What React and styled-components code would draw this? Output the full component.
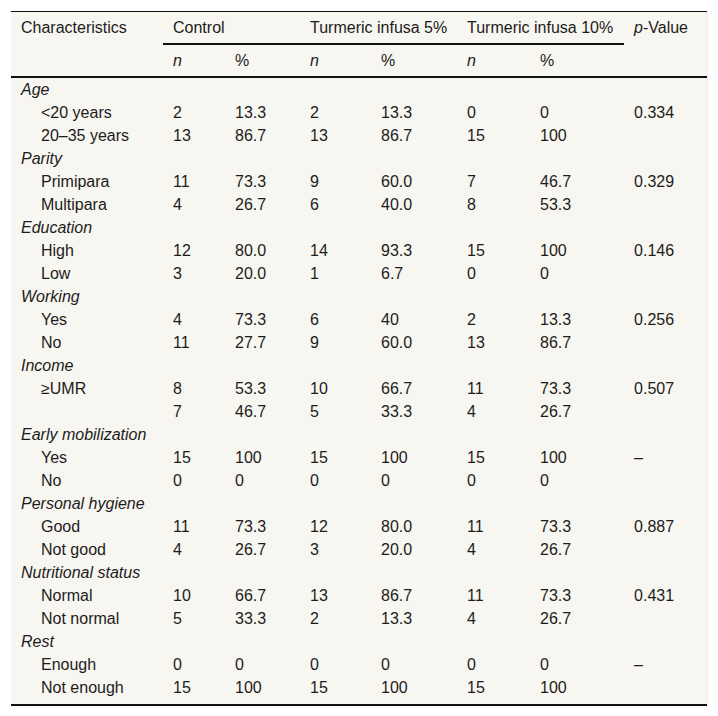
import React from 'react';
import styled, { createGlobalStyle } from 'styled-components';

const GlobalStyle = createGlobalStyle`
body {
  margin: 0;
  background: #ffffff;
  font-family: "Liberation Sans", Arial, sans-serif;
  color: #1c1c1c;
}
`;

const Page = styled.div`
padding: 11px;
`;

const Frame = styled.div`
width: 696px;
background: #f8f6f0;
border-right: 1px solid #ececec;
`;

const Table = styled.table`
width: 696px;
table-layout: fixed;
border-collapse: collapse;
border-top: 1px solid #111;
border-bottom: 2px solid #111;
font-size: 16px;
`;

const HeadCell = styled.th`
text-align: left;
font-weight: normal;
vertical-align: top;
padding: 0 10px;
height: 31px;
line-height: 31px;
white-space: nowrap;
border-bottom: ${p => (p.$rule ? '2px solid #111' : 'none')};
`;

const SubHead = styled.tr`
border-bottom: 2px solid #111;
`;

const Row = styled.tr``;

const Cell = styled.td`
padding: 0 10px;
padding-left: ${p => (p.$indent ? '30px' : '10px')};
padding-bottom: ${p => (p.$last ? '5px' : '0')};
vertical-align: top;
height: 23px;
line-height: 23px;
white-space: nowrap;
font-style: ${p => (p.$group ? 'italic' : 'normal')};
`;

const Italic = styled.i``;

const data = [
  { group: 'Age', rows: [
    ['<20 years', '2', '13.3', '2', '13.3', '0', '0', '0.334'],
    ['20–35 years', '13', '86.7', '13', '86.7', '15', '100', ''],
  ] },
  { group: 'Parity', rows: [
    ['Primipara', '11', '73.3', '9', '60.0', '7', '46.7', '0.329'],
    ['Multipara', '4', '26.7', '6', '40.0', '8', '53.3', ''],
  ] },
  { group: 'Education', rows: [
    ['High', '12', '80.0', '14', '93.3', '15', '100', '0.146'],
    ['Low', '3', '20.0', '1', '6.7', '0', '0', ''],
  ] },
  { group: 'Working', rows: [
    ['Yes', '4', '73.3', '6', '40', '2', '13.3', '0.256'],
    ['No', '11', '27.7', '9', '60.0', '13', '86.7', ''],
  ] },
  { group: 'Income', rows: [
    ['≥UMR', '8', '53.3', '10', '66.7', '11', '73.3', '0.507'],
    ['', '7', '46.7', '5', '33.3', '4', '26.7', ''],
  ] },
  { group: 'Early mobilization', rows: [
    ['Yes', '15', '100', '15', '100', '15', '100', '–'],
    ['No', '0', '0', '0', '0', '0', '0', ''],
  ] },
  { group: 'Personal hygiene', rows: [
    ['Good', '11', '73.3', '12', '80.0', '11', '73.3', '0.887'],
    ['Not good', '4', '26.7', '3', '20.0', '4', '26.7', ''],
  ] },
  { group: 'Nutritional status', rows: [
    ['Normal', '10', '66.7', '13', '86.7', '11', '73.3', '0.431'],
    ['Not normal', '5', '33.3', '2', '13.3', '4', '26.7', ''],
  ] },
  { group: 'Rest', rows: [
    ['Enough', '0', '0', '0', '0', '0', '0', '–'],
    ['Not enough', '15', '100', '15', '100', '15', '100', ''],
  ] },
];

const widths = [152, 62, 75, 71, 86, 73, 94, 83];

export default function App() {
  return (
    <Page>
      <GlobalStyle />
      <Frame>
        <Table>
          <colgroup>
            {widths.map((w, i) => <col key={i} style={{ width: w }} />)}
          </colgroup>
          <thead>
            <tr>
              <HeadCell rowSpan={2}>Characteristics</HeadCell>
              <HeadCell colSpan={2} $rule>Control</HeadCell>
              <HeadCell colSpan={2} $rule>Turmeric infusa 5%</HeadCell>
              <HeadCell colSpan={2} $rule>Turmeric infusa 10%</HeadCell>
              <HeadCell rowSpan={2}><Italic>p</Italic>-Value</HeadCell>
            </tr>
            <SubHead>
              <HeadCell><Italic>n</Italic></HeadCell>
              <HeadCell>%</HeadCell>
              <HeadCell><Italic>n</Italic></HeadCell>
              <HeadCell>%</HeadCell>
              <HeadCell><Italic>n</Italic></HeadCell>
              <HeadCell>%</HeadCell>
            </SubHead>
          </thead>
          <tbody>
            {data.map((section, si) => (
              <React.Fragment key={section.group}>
                <Row>
                  <Cell $group colSpan={8}>{section.group}</Cell>
                </Row>
                {section.rows.map((r, i) => {
                  const last = si === data.length - 1 && i === section.rows.length - 1;
                  return (
                    <Row key={i}>
                      {r.map((v, j) => (
                        <Cell key={j} $indent={j === 0} $last={last}>{v}</Cell>
                      ))}
                    </Row>
                  );
                })}
              </React.Fragment>
            ))}
          </tbody>
        </Table>
      </Frame>
    </Page>
  );
}
